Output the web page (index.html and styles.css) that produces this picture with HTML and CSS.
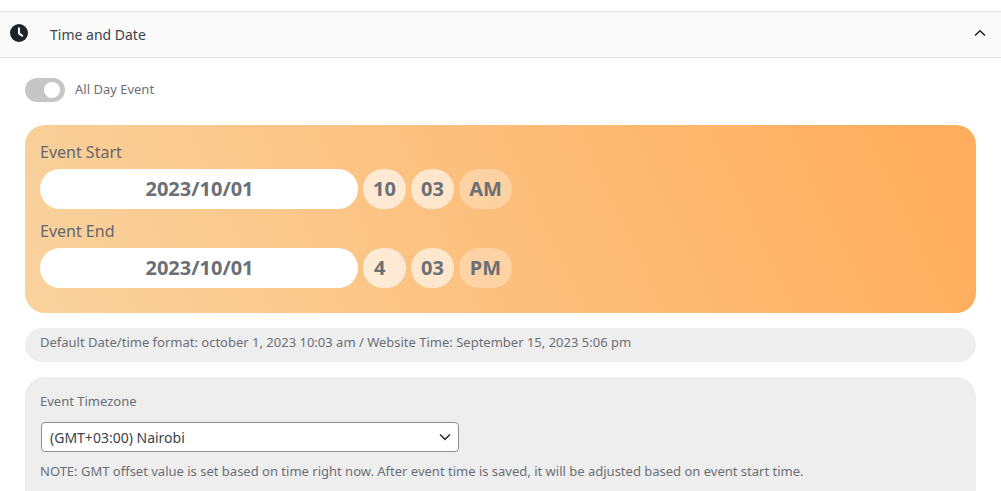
FILE: index.html
```html
<!DOCTYPE html>
<html lang="en">
<head>
<meta charset="utf-8">
<title>Time and Date</title>
<link rel="stylesheet" href="styles.css">
</head>
<body>
<div class="page">
  <header class="section-head">
    <svg class="clock" width="18" height="18" viewBox="0 0 18 18" aria-hidden="true">
      <circle cx="9" cy="9" r="9" fill="#1d2327"/>
      <path d="M9 3.4V9.4L12.8 12.2" fill="none" stroke="#fff" stroke-width="2"/>
    </svg>
    <span class="section-title">Time and Date</span>
    <svg class="chevron-up" width="12" height="8" viewBox="0 0 12 8" aria-hidden="true">
      <path d="M1 6.5L6 1.7L11 6.5" fill="none" stroke="#222" stroke-width="1.5"/>
    </svg>
  </header>
  <main class="section-body">
    <div class="toggle-row">
      <span class="toggle"><span class="knob"></span></span>
      <span class="toggle-label">All Day Event</span>
    </div>
    <section class="date-card">
      <div class="date-label">Event Start</div>
      <div class="date-row">
        <div class="pill date">2023/10/01</div>
        <div class="pill num strong">10</div>
        <div class="pill num mid">03</div>
        <div class="pill ampm">AM</div>
      </div>
      <div class="date-label second">Event End</div>
      <div class="date-row">
        <div class="pill date">2023/10/01</div>
        <div class="pill num strong left">4</div>
        <div class="pill num mid">03</div>
        <div class="pill ampm">PM</div>
      </div>
    </section>
    <div class="info-bar">Default Date/time format: october 1, 2023 10:03 am / Website Time: September 15, 2023 5:06 pm</div>
    <section class="tz-card">
      <div class="tz-label">Event Timezone</div>
      <div class="tz-select">
        <span>(GMT+03:00) Nairobi</span>
        <svg width="12" height="8" viewBox="0 0 12 8" aria-hidden="true">
          <path d="M1 1.5L6 6.3L11 1.5" fill="none" stroke="#333" stroke-width="1.6"/>
        </svg>
      </div>
      <p class="tz-note">NOTE: GMT offset value is set based on time right now. After event time is saved, it will be adjusted based on event start time.</p>
    </section>
  </main>
</div>
</body>
</html>
```
FILE: styles.css
```css
* { box-sizing: border-box; }
html, body { margin: 0; padding: 0; height: 491px; overflow: hidden; background: #fff; }
body { font-family: "Noto Sans", "Open Sans", sans-serif; color: #6b6f76; }
.page { padding-top: 11px; }
.section-head {
  display: flex; align-items: center; height: 47px;
  background: #fafafa;
  border-top: 1px solid #e2e2e2; border-bottom: 1px solid #e2e2e2;
  padding: 0 15px 2px 10px;
}
.clock { flex: none; margin-top: -2px; }
.section-title { margin-left: 22px; font-size: 14px; color: #3c434a; flex: 1; position: relative; top: 1px; }
.chevron-up { flex: none; margin-top: -2px; }
.section-body { padding: 20px 25px 0; }
.toggle-row { display: flex; align-items: center; height: 24px; }
.toggle { width: 40px; height: 24px; border-radius: 12px; background: #c6c6c6; display: flex; align-items: center; justify-content: flex-end; padding-right: 5px; }
.knob { width: 16px; height: 16px; border-radius: 50%; background: #fff; }
.toggle-label { margin-left: 10px; font-size: 13px; position: relative; top: -1px; }
.date-card {
  margin-top: 23px; height: 188px; border-radius: 20px;
  padding: 16px 15px 0;
  background: linear-gradient(65deg, #f9d39f 0%, #ffae5e 93%);
}
.date-label { font-size: 16px; line-height: 22px; height: 28px; color: #63666c; }
.date-label.second { margin-top: 11px; }
.date-row { display: flex; gap: 5px; height: 40px; }
.pill { height: 40px; border-radius: 20px; font-weight: 700; font-size: 20px; line-height: 40px; color: #6b6f76; text-align: center; }
.date { width: 318px; background: #fff; padding-left: 1px; }
.num { width: 43px; }
.strong { background: rgba(255,255,255,.65); }
.mid { background: rgba(255,255,255,.6); }
.left { text-align: left; padding-left: 11px; }
.ampm { width: 53px; background: rgba(255,255,255,.3); }
.info-bar {
  margin-top: 15px; height: 34px; border-radius: 17px; background: #eeeeee;
  padding: 5px 15px 0; font-size: 13px; line-height: 18px;
}
.tz-card { margin-top: 15px; height: 130px; border-radius: 20px 20px 0 0; background: #eeeeee; padding: 15px 15px 0; }
.tz-label { font-size: 13px; line-height: 18px; }
.tz-select {
  margin-top: 12px; margin-left: 1px; width: 418px; height: 30px;
  border: 1px solid #8c8f94; border-radius: 4px; background: #fff;
  display: flex; align-items: center; justify-content: space-between;
  padding: 0 7px 0 8px; font-size: 14px; color: #3c434a;
}
.tz-note { margin: 10px 0 0; font-size: 13px; line-height: 18px; }
```
